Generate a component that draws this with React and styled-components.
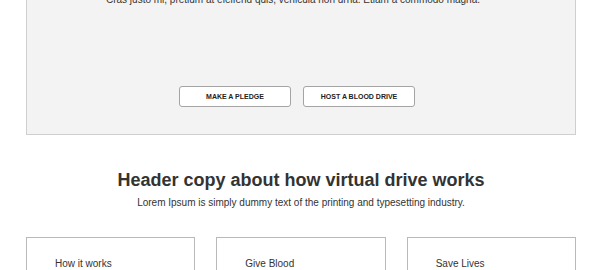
import React from 'react'
import styled, { createGlobalStyle } from 'styled-components'

const GlobalStyle = createGlobalStyle`
  html, body {
    margin: 0;
    padding: 0;
    background: #fff;
    font-family: "Liberation Sans", Arial, Helvetica, sans-serif;
    color: #333;
    overflow: hidden;
  }
`

const Page = styled.div`
  width: 550px;
  margin: 0 26px;
`

const Hero = styled.section`
  margin-top: -8px;
  padding: 0 20px 27px;
  background: #f3f3f3;
  border: 1px solid #cfcfcf;
  text-align: center;
`

const HeroText = styled.p`
  margin: 0;
  padding-right: 16px;
  font-size: 10px;
  line-height: 14px;
  color: #333;
`

const Actions = styled.div`
  display: flex;
  justify-content: center;
  gap: 12px;
  margin: 79px 8px 0 0;
`

const Button = styled.button`
  width: 112px;
  height: 21px;
  padding: 0;
  background: #fff;
  border: 1px solid #a4a4a4;
  border-radius: 3px;
  font-family: inherit;
  font-size: 7px;
  font-weight: bold;
  color: #222;
  text-transform: uppercase;
  cursor: pointer;
`

const Intro = styled.section`
  margin-top: 34px;
  text-align: center;
`

const Heading = styled.h2`
  margin: 0;
  font-size: 18px;
  line-height: 22px;
  font-weight: bold;
  color: #333;
`

const Lead = styled.p`
  margin: 6px 0 0;
  font-size: 10px;
  line-height: 12px;
  color: #333;
`

const Cards = styled.div`
  display: grid;
  grid-template-columns: repeat(3, 1fr);
  gap: 21px;
  margin-top: 28px;
`

const Card = styled.div`
  height: 120px;
  padding: 20px 28px 0;
  border: 1px solid #b9b9b9;
  background: #fff;
`

const CardTitle = styled.h3`
  margin: 0;
  font-size: 10px;
  line-height: 12px;
  font-weight: normal;
  color: #333;
`

const steps = ['How it works', 'Give Blood', 'Save Lives']

export default function App() {
  return (
    <Page>
      <GlobalStyle />
      <Hero>
        <HeroText>
          Cras justo mi, pretium at eleifend quis, vehicula non urna. Etiam a commodo magna.
        </HeroText>
        <Actions>
          <Button>Make a pledge</Button>
          <Button>Host a blood drive</Button>
        </Actions>
      </Hero>

      <Intro>
        <Heading>Header copy about how virtual drive works</Heading>
        <Lead>Lorem Ipsum is simply dummy text of the printing and typesetting industry.</Lead>
      </Intro>

      <Cards>
        {steps.map((title) => (
          <Card key={title}>
            <CardTitle>{title}</CardTitle>
          </Card>
        ))}
      </Cards>
    </Page>
  )
}
